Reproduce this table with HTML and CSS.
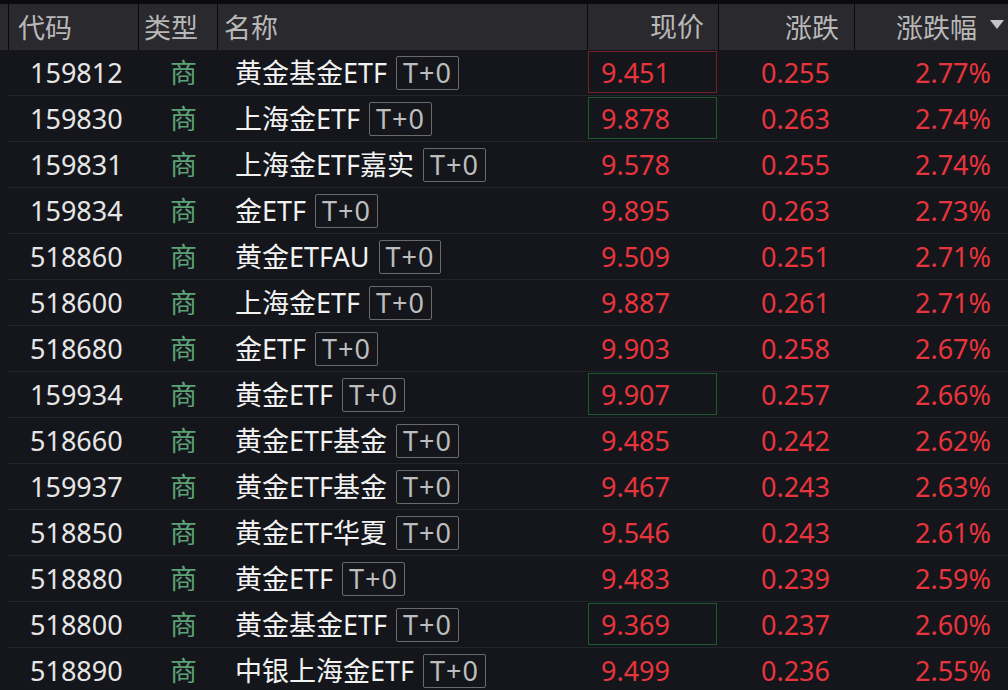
FILE: index.html
```html
<!DOCTYPE html>
<html lang="zh-CN">
<head>
<meta charset="utf-8">
<title>行情</title>
<link rel="stylesheet" href="styles.css">
</head>
<body>
<div class="topbar"></div>
<div class="table">
  <div class="row head">
    <div class="c c0"></div>
    <div class="c c1">代码</div>
    <div class="c c2">类型</div>
    <div class="c c3">名称</div>
    <div class="c c4">现价</div>
    <div class="c c5">涨跌</div>
    <div class="c c6">涨跌幅<span class="tri"></span></div>
  </div>
  <div class="row"><div class="c c0"></div><div class="c c1">159812</div><div class="c c2">商</div><div class="c c3">黄金基金ETF<span class="tag">T+0</span></div><div class="c c4"><span class="box red">9.451</span></div><div class="c c5">0.255</div><div class="c c6">2.77%</div></div>
  <div class="row"><div class="c c0"></div><div class="c c1">159830</div><div class="c c2">商</div><div class="c c3">上海金ETF<span class="tag">T+0</span></div><div class="c c4"><span class="box green">9.878</span></div><div class="c c5">0.263</div><div class="c c6">2.74%</div></div>
  <div class="row"><div class="c c0"></div><div class="c c1">159831</div><div class="c c2">商</div><div class="c c3">上海金ETF嘉实<span class="tag">T+0</span></div><div class="c c4"><span class="box">9.578</span></div><div class="c c5">0.255</div><div class="c c6">2.74%</div></div>
  <div class="row"><div class="c c0"></div><div class="c c1">159834</div><div class="c c2">商</div><div class="c c3">金ETF<span class="tag">T+0</span></div><div class="c c4"><span class="box">9.895</span></div><div class="c c5">0.263</div><div class="c c6">2.73%</div></div>
  <div class="row"><div class="c c0"></div><div class="c c1">518860</div><div class="c c2">商</div><div class="c c3">黄金ETFAU<span class="tag">T+0</span></div><div class="c c4"><span class="box">9.509</span></div><div class="c c5">0.251</div><div class="c c6">2.71%</div></div>
  <div class="row"><div class="c c0"></div><div class="c c1">518600</div><div class="c c2">商</div><div class="c c3">上海金ETF<span class="tag">T+0</span></div><div class="c c4"><span class="box">9.887</span></div><div class="c c5">0.261</div><div class="c c6">2.71%</div></div>
  <div class="row"><div class="c c0"></div><div class="c c1">518680</div><div class="c c2">商</div><div class="c c3">金ETF<span class="tag">T+0</span></div><div class="c c4"><span class="box">9.903</span></div><div class="c c5">0.258</div><div class="c c6">2.67%</div></div>
  <div class="row"><div class="c c0"></div><div class="c c1">159934</div><div class="c c2">商</div><div class="c c3">黄金ETF<span class="tag">T+0</span></div><div class="c c4"><span class="box green">9.907</span></div><div class="c c5">0.257</div><div class="c c6">2.66%</div></div>
  <div class="row"><div class="c c0"></div><div class="c c1">518660</div><div class="c c2">商</div><div class="c c3">黄金ETF基金<span class="tag">T+0</span></div><div class="c c4"><span class="box">9.485</span></div><div class="c c5">0.242</div><div class="c c6">2.62%</div></div>
  <div class="row"><div class="c c0"></div><div class="c c1">159937</div><div class="c c2">商</div><div class="c c3">黄金ETF基金<span class="tag">T+0</span></div><div class="c c4"><span class="box">9.467</span></div><div class="c c5">0.243</div><div class="c c6">2.63%</div></div>
  <div class="row"><div class="c c0"></div><div class="c c1">518850</div><div class="c c2">商</div><div class="c c3">黄金ETF华夏<span class="tag">T+0</span></div><div class="c c4"><span class="box">9.546</span></div><div class="c c5">0.243</div><div class="c c6">2.61%</div></div>
  <div class="row"><div class="c c0"></div><div class="c c1">518880</div><div class="c c2">商</div><div class="c c3">黄金ETF<span class="tag">T+0</span></div><div class="c c4"><span class="box">9.483</span></div><div class="c c5">0.239</div><div class="c c6">2.59%</div></div>
  <div class="row"><div class="c c0"></div><div class="c c1">518800</div><div class="c c2">商</div><div class="c c3">黄金基金ETF<span class="tag">T+0</span></div><div class="c c4"><span class="box green">9.369</span></div><div class="c c5">0.237</div><div class="c c6">2.60%</div></div>
  <div class="row"><div class="c c0"></div><div class="c c1">518890</div><div class="c c2">商</div><div class="c c3">中银上海金ETF<span class="tag">T+0</span></div><div class="c c4"><span class="box">9.499</span></div><div class="c c5">0.236</div><div class="c c6">2.55%</div></div>
</div>
</body>
</html>
```
FILE: styles.css
```css
html, body {
  margin: 0;
  padding: 0;
  background: #14161b;
  overflow: hidden;
  width: 1008px;
  height: 690px;
}
body {
  font-family: "Noto Sans", "Noto Sans CJK SC", sans-serif;
  font-size: 27px;
}
.topbar {
  height: 4px;
  background: #0b0b0d;
}
.table {
  display: flex;
  flex-direction: column;
}
.row {
  display: grid;
  grid-template-columns: 8px 130px 79px 370px 131px 136px 154px;
  height: 46px;
}
.c {
  display: flex;
  align-items: center;
  line-height: 1;
  white-space: nowrap;
  border-bottom: 1px solid #23252b;
  box-sizing: border-box;
}
.row .c0 { border-bottom: none; }
.head .c {
  background: #2a292e;
  color: #b8b8b8;
  border-bottom: none;
  border-left: 1px solid #0a0a0c;
}
.head .c0 { border-left: none; }
.head .c1 { padding-left: 9px; }
.head .c2 { padding-left: 5px; }
.head .c3 { padding-left: 6px; }
.head .c4 { justify-content: flex-end; padding-right: 14px; }
.head .c5 { justify-content: flex-end; padding-right: 15px; }
.head .c6 { justify-content: flex-end; padding-right: 4px; }
.tri {
  width: 0;
  height: 0;
  border-left: 7px solid transparent;
  border-right: 7px solid transparent;
  border-top: 9px solid #c4c4c4;
  margin-left: 13px;
  margin-top: -6px;
}
.c1 { color: #e6e6e6; padding-left: 22px; }
.c2 { color: #5ca276; padding-left: 32px; }
.c3 { color: #f2f2f2; padding-left: 18px; }
.c4 { padding: 1px 1px 2px 1px; }
.box {
  flex: 1;
  align-self: stretch;
  display: flex;
  align-items: center;
  padding-left: 12px;
  color: #e8343c;
  border: 1px solid transparent;
}
.box.red { border-color: #6e2227; }
.box.green { border-color: #1e5a2d; }
.c5 { color: #e8343c; justify-content: flex-end; padding-right: 24px; }
.c6 { color: #e8343c; justify-content: flex-end; padding-right: 17px; }
.tag {
  display: inline-flex;
  align-items: center;
  height: 34px;
  padding: 0 6px;
  margin-left: 9px;
  border: 1px solid #6a6a6a;
  border-radius: 2px;
  color: #bdbdbd;
  letter-spacing: 1px;
  box-sizing: border-box;
}
```
